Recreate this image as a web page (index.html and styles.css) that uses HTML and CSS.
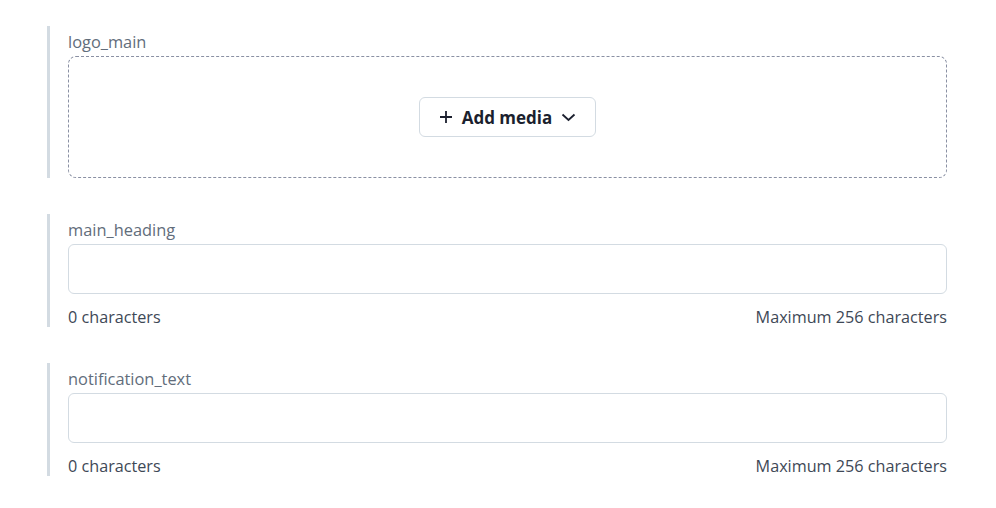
FILE: index.html
```html
<!doctype html>
<html lang="en">
<head>
    <meta charset="UTF-8">
    <title>Fields</title>
    <link rel="stylesheet" href="styles.css">
</head>
<body>
<div class="form">
    <div class="field">
        <label class="field-label">logo_main</label>
        <div class="media-drop">
            <button class="media-btn">
                <svg class="ico" width="14" height="14" viewBox="0 0 14 14"><path d="M7 1v12M1 7h12" stroke="#1b1f2e" stroke-width="1.8" fill="none"/></svg>
                <span>Add media</span>
                <svg class="ico" width="15" height="14" viewBox="0 0 15 14"><path d="M1.5 4.5l6 5.5 6-5.5" stroke="#1b1f2e" stroke-width="1.8" fill="none"/></svg>
            </button>
        </div>
    </div>
    <div class="field">
        <label class="field-label">main_heading</label>
        <input type="text" class="text-input">
        <div class="field-meta">
            <span>0 characters</span>
            <span>Maximum 256 characters</span>
        </div>
    </div>
    <div class="field">
        <label class="field-label">notification_text</label>
        <input type="text" class="text-input">
        <div class="field-meta">
            <span>0 characters</span>
            <span>Maximum 256 characters</span>
        </div>
    </div>
</div>
</body>
</html>
```
FILE: styles.css
```css
*
{
    box-sizing: border-box;
    font-family: "Open Sans", sans-serif;
}

body
{
    margin: 0;
    background-color: #ffffff;
}

.form
{
    width: 900px;
    margin-left: 47px;
    padding-top: 26px;
    display: flex;
    flex-direction: column;
    gap: 36px;
}

.field
{
    border-left: 3px solid #d3dbe2;
    padding-left: 18px;
    display: flex;
    flex-direction: column;
}

.field-label
{
    font-size: 16.4px;
    line-height: 24px;
    color: #626d7b;
    padding-top: 4px;
    margin-bottom: 2px;
}

.media-drop
{
    height: 122px;
    border: 1px dashed #8a90a3;
    border-radius: 8px;
    display: flex;
    align-items: center;
    justify-content: center;
}

.media-btn
{
    height: 40px;
    width: 177px;
    display: flex;
    align-items: center;
    justify-content: center;
    gap: 9px;
    background-color: #ffffff;
    border: 1px solid #d3dbe2;
    border-radius: 6px;
    font-size: 17px;
    font-weight: 700;
    color: #1b1f2e;
}

.text-input
{
    height: 50px;
    border: 1px solid #d3dbe2;
    border-radius: 6px;
    outline: none;
}

.field-meta
{
    display: flex;
    justify-content: space-between;
    margin-top: 13px;
    font-size: 16.2px;
    line-height: 20px;
    color: #3e4856;
}
```
